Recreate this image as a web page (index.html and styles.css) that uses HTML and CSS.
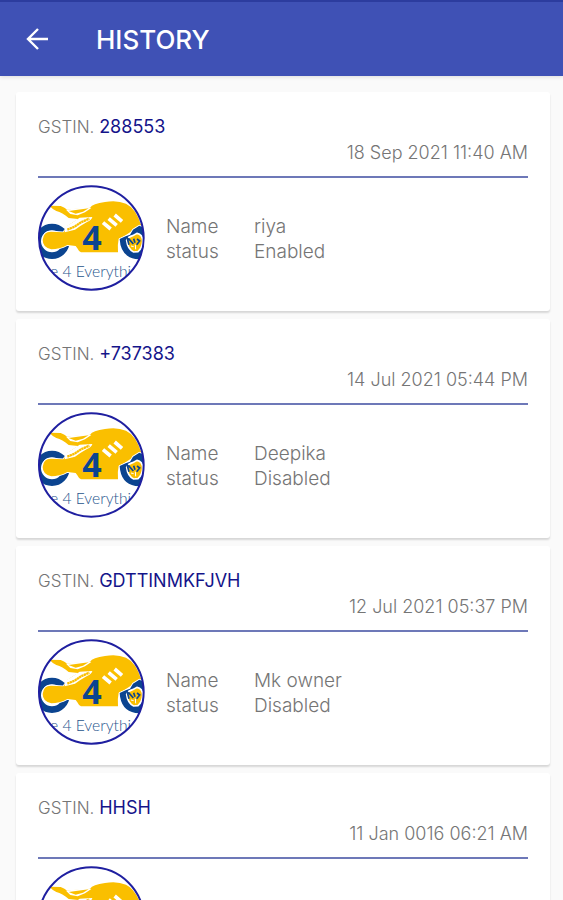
FILE: index.html
```html
<!DOCTYPE html>
<html lang="en">
<head>
<meta charset="utf-8">
<meta name="viewport" content="width=device-width, initial-scale=1">
<title>History</title>
<link rel="stylesheet" href="styles.css">
</head>
<body>
<svg class="defs" aria-hidden="true">
  <defs>
    <clipPath id="disc"><ellipse cx="184" cy="187" rx="158" ry="156"/></clipPath>
    <symbol id="logo" viewBox="24 28 321 318">
      <ellipse cx="184" cy="187" rx="158" ry="156" fill="#fff"/>
      <g clip-path="url(#disc)">
        <circle cx="66" cy="197" r="43" fill="#fff" stroke="#0b4490" stroke-width="20"/>
        <path fill="#fabf00" stroke="#fff" stroke-width="5" paint-order="stroke" d="M58 90 L92 91 Q102 94 112 102 L132 100 Q157 98 180 96 Q188 84 225 79 Q260 72 288 84 Q318 98 334 150 L306 166 L282 182 L266 190 Q262 208 264 230 L153 230 Q147 229 142 218 L137 211 L112 208 Q88 221 64 221 Q38 216 38 193 Q40 168 63 168 L100 170 Q108 160 112 151 Q126 141 145 130 L137 129 L116 127 Q97 111 79 106 Q66 99 58 90 Z"/>
        <path fill="#fff" d="M108 102 L170 94 L184 97 L165 110 L143 119 L121 115 Z M106 153 Q130 139 149 126 L187 124 Q185 133 171 139 L151 151 L135 162 L104 170 Z"/>
        <path fill="#fabf00" d="M116 106 L176 98 L159 108 L137 114 Z"/>
        <path fill="none" stroke="#fabf00" stroke-width="7" stroke-dasharray="7 1" d="M112 162 L134 153 L153 140 L178 129"/>
        <path fill="none" stroke="#fff" stroke-width="11" d="M219 141 L242 160 M236 129 L260 149 M254 118 L276 137"/>
        <path fill="#0b4490" stroke="#fff" stroke-width="5" paint-order="stroke" d="M269 190 L287 182 L300 177 L309 162 L328 150 L350 160 V252 L316 250 Q272 242 269 190 Z"/>
        <path fill="#fabf00" stroke="#fff" stroke-width="5" d="M290 194 Q295 183 308 180 L321 173 Q338 176 338 197 Q337 216 324 228 L311 229 Q293 220 290 194 Z"/>
        <path fill="none" stroke="#0b4490" stroke-width="5" d="M291 185 L297 207 M295 188 L310 205 M311 189 L315 201 M321 190 L329 196 L320 207"/>
        <path fill="none" stroke="#fff" stroke-width="3" d="M303 211 L311 213 M316 207 L317 221"/>
        <text class="logo-digit" x="157" y="222">4</text>
        <text class="logo-name" x="60" y="303">e 4 Everything</text>
      </g>
      <ellipse cx="184" cy="187" rx="157" ry="155" fill="none" stroke="#1f1fa0" stroke-width="6"/>
    </symbol>
  </defs>
</svg>
<div class="app">
  <header class="bar">
    <button class="back" type="button" aria-label="Back">
      <svg width="24" height="24" viewBox="0 0 24 24" fill="none" stroke="#fff" stroke-width="2.4" aria-hidden="true"><path d="M22 11H3M12 1L2 11l10 10"/></svg>
    </button>
    <h1 class="title">HISTORY</h1>
  </header>
  <main class="list">
    <article class="card">
      <header class="head">
        <p class="gstin">GSTIN. <span class="number">288553</span></p>
        <p class="date">18 Sep 2021 11:40 AM</p>
      </header>
      <div class="body">
        <svg class="avatar" role="img" aria-label="Logo"><use href="#logo"/></svg>
        <dl class="facts"><dt>Name</dt><dd>riya</dd><dt>status</dt><dd>Enabled</dd></dl>
      </div>
    </article>
    <article class="card">
      <header class="head">
        <p class="gstin">GSTIN. <span class="number">+737383</span></p>
        <p class="date">14 Jul 2021 05:44 PM</p>
      </header>
      <div class="body">
        <svg class="avatar" role="img" aria-label="Logo"><use href="#logo"/></svg>
        <dl class="facts"><dt>Name</dt><dd>Deepika</dd><dt>status</dt><dd>Disabled</dd></dl>
      </div>
    </article>
    <article class="card">
      <header class="head">
        <p class="gstin">GSTIN. <span class="number">GDTTINMKFJVH</span></p>
        <p class="date">12 Jul 2021 05:37 PM</p>
      </header>
      <div class="body">
        <svg class="avatar" role="img" aria-label="Logo"><use href="#logo"/></svg>
        <dl class="facts"><dt>Name</dt><dd>Mk owner</dd><dt>status</dt><dd>Disabled</dd></dl>
      </div>
    </article>
    <article class="card">
      <header class="head">
        <p class="gstin">GSTIN. <span class="number">HHSH</span></p>
        <p class="date">11 Jan 0016 06:21 AM</p>
      </header>
      <div class="body">
        <svg class="avatar" role="img" aria-label="Logo"><use href="#logo"/></svg>
      </div>
    </article>
  </main>
</div>
</body>
</html>
```
FILE: styles.css
```css
* {
  box-sizing: border-box;
}

body,
h1,
p,
dl,
dd {
  margin: 0;
}

body {
  background: #fafafa;
  color: #757575;
  font: 300 18px/25px Inter, "Liberation Sans", sans-serif;
}

.defs {
  position: absolute;
  width: 0;
  height: 0;
}

.app {
  display: flex;
  flex-direction: column;
  height: 100vh;
}

.bar {
  display: flex;
  flex: none;
  align-items: center;
  gap: 46px;
  height: 76px;
  padding: 2px 26px 0;
  border-top: 2px solid #2c3c9e;
  background: #3f51b5;
  box-shadow: 0 1px 4px rgba(0, 0, 0, 0.12);
}

.back {
  display: flex;
  padding: 0;
  border: 0;
  background: none;
}

.title {
  color: #fff;
  font-size: 26px;
  font-weight: 500;
  line-height: 32px;
}

.list {
  display: flex;
  flex: 1;
  flex-direction: column;
  gap: 8px;
  min-height: 0;
  padding: 16px 13px 16px 16px;
  overflow-y: auto;
  scrollbar-width: none;
}

.card {
  flex: none;
  min-height: 219px;
  padding: 22px 22px 20px;
  border-radius: 3px;
  background: #fff;
  box-shadow: 0 2px 2px rgba(0, 0, 0, 0.14);
}

.head {
  padding-bottom: 11px;
  border-bottom: 2px solid #6d78b8;
}

.gstin {
  font-size: 17px;
}

.number {
  color: #14148a;
  font-size: 18px;
  font-weight: 400;
}

.date {
  text-align: right;
}

.body {
  display: flex;
  align-items: center;
  gap: 21px;
  padding-top: 7px;
}

.avatar {
  flex: none;
  width: 107px;
  height: 106px;
}

.facts {
  display: grid;
  grid-template-columns: 88px 1fr;
  padding-top: 2px;
  font-size: 19px;
}

.logo-digit {
  fill: #0b4490;
  font: 700 102px "Open Sans", sans-serif;
}

.logo-name {
  fill: #26548c;
  font: 300 47px Lato, sans-serif;
}
```
